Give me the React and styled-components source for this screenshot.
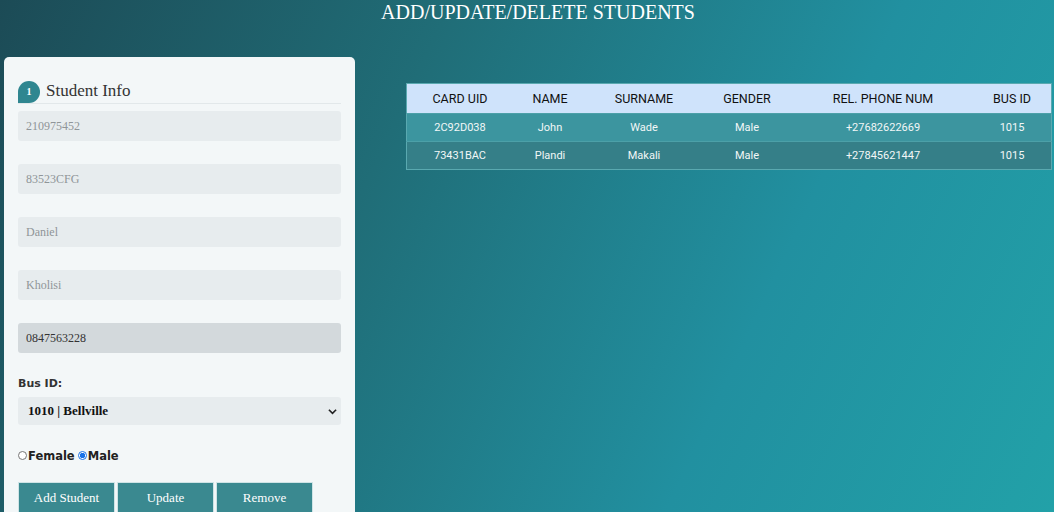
import React, { useState } from 'react'
import styled, { createGlobalStyle } from 'styled-components'

const GlobalStyle = createGlobalStyle`
  html, body {
    margin: 0;
    height: 100%;
    overflow: hidden;
  }
  body {
    background: linear-gradient(115deg, #1c4b56 0%, #206d77 35%, #2190a0 70%, #22a1a8 100%);
    font-family: "Liberation Serif", serif;
  }
`

const Page = styled.div`
  height: 512px;
  display: flex;
  flex-direction: column;
`

const Heading = styled.h1`
  flex-shrink: 0;
  margin: 0;
  height: 57px;
  text-align: center;
  color: #fff;
  font-weight: normal;
  font-size: 20px;
  line-height: 24px;
  font-family: "Liberation Serif", serif;
  padding-left: 22px;
`

const Main = styled.div`
  flex-shrink: 0;
  display: flex;
  align-items: flex-start;
  padding-left: 4px;
  gap: 51px;
`

const Card = styled.div`
  flex-shrink: 0;
  width: 351px;
  height: 480px;
  box-sizing: border-box;
  background: #f3f7f8;
  border-radius: 5px;
  padding: 22px 14px 0 14px;
`

const CardHead = styled.div`
  display: flex;
  align-items: center;
  gap: 6px;
  border-bottom: 1px solid #e2e8ea;
  margin-bottom: 7px;
  height: 24px;
`

const Badge = styled.span`
  width: 22px;
  height: 22px;
  background: #2f8690;
  color: #fff;
  font-size: 10px;
  font-weight: bold;
  border-radius: 50% 50% 50% 0;
  display: flex;
  align-items: center;
  justify-content: center;
  margin-top: 1px;
`

const CardTitle = styled.h2`
  margin: 0;
  font-weight: normal;
  font-size: 17px;
  color: #333;
  font-family: "Liberation Serif", serif;
`

const Fields = styled.div`
  display: flex;
  flex-direction: column;
  gap: 23px;
`

const Field = styled.input`
  height: 30px;
  box-sizing: border-box;
  border: none;
  border-radius: 3px;
  background: ${p => (p.$active ? '#d3d9dc' : '#e7ecee')};
  padding: 0 8px;
  font-family: "Liberation Serif", serif;
  font-size: 12px;
  color: #333;
  outline: none;
  &::placeholder {
    color: #8f9598;
  }
`

const Label = styled.label`
  display: block;
  margin-top: 24px;
  font-family: "DejaVu Sans", sans-serif;
  font-weight: bold;
  font-size: 11px;
  color: #333;
`

const SelectBox = styled.div`
  position: relative;
  margin-top: 7px;
  height: 28px;
  background: #e7ecee;
  border-radius: 3px;
  display: flex;
  align-items: center;
  padding-left: 10px;
  font-family: "Liberation Serif", serif;
  font-weight: bold;
  font-size: 13px;
  color: #111;
`

const Chevron = styled.svg`
  position: absolute;
  right: 4px;
  top: 11px;
`

const Radios = styled.div`
  display: flex;
  align-items: center;
  margin-top: 24px;
  font-family: "DejaVu Sans", sans-serif;
  font-weight: bold;
  font-size: 11.5px;
  color: #222;
`

const Radio = styled.span`
  box-sizing: border-box;
  width: 9px;
  height: 9px;
  border-radius: 50%;
  border: 1px solid ${p => (p.$on ? '#1a73e8' : '#777')};
  background: ${p => (p.$on ? 'radial-gradient(circle, #1a73e8 0 2.5px, #fff 3px)' : '#fff')};
  margin-right: 1px;
  margin-left: ${p => (p.$gap ? '3px' : '0')};
  position: relative;
  top: -1px;
`

const Buttons = styled.div`
  display: flex;
  gap: 2px;
  margin-top: 19px;
`

const Button = styled.button`
  width: 97px;
  height: 34px;
  background: #3a8990;
  color: #fff;
  border: 1px solid #cfe4e6;
  font-family: "Liberation Serif", serif;
  font-size: 13px;
  padding: 0 0 2px;
`

const TableWrap = styled.div`
  margin-top: 26px;
`

const Table = styled.table`
  border-collapse: collapse;
  width: 646px;
  border: 1px solid #5aa9b0;
  font-family: Roboto, sans-serif;
  text-align: center;
`

const Th = styled.th`
  background: #cfe3fb;
  color: #111;
  font-weight: normal;
  font-size: 12.5px;
  height: 29px;
  padding: 0;
  width: ${p => p.$w}px;
`

const Tr = styled.tr`
  background: ${p => (p.$dark ? '#357f88' : '#3c959f')};
  border-top: 1px solid #4ca0a8;
`

const Td = styled.td`
  color: #f2f7f7;
  font-size: 11px;
  height: 27px;
  padding: 0;
`

const columns = [
  ['CARD UID', 106],
  ['NAME', 74],
  ['SURNAME', 114],
  ['GENDER', 92],
  ['REL. PHONE NUM', 180],
  ['BUS ID', 78],
]

const students = [
  ['2C92D038', 'John', 'Wade', 'Male', '+27682622669', '1015'],
  ['73431BAC', 'Plandi', 'Makali', 'Male', '+27845621447', '1015'],
]

const App = () => {
  const [phone, setPhone] = useState('0847563228')

  return (
    <Page>
      <GlobalStyle />
      <Heading>ADD/UPDATE/DELETE STUDENTS</Heading>
      <Main>
        <Card>
          <CardHead>
            <Badge>1</Badge>
            <CardTitle>Student Info</CardTitle>
          </CardHead>
          <Fields>
            <Field placeholder="210975452" />
            <Field placeholder="83523CFG" />
            <Field placeholder="Daniel" />
            <Field placeholder="Kholisi" />
            <Field $active value={phone} onChange={e => setPhone(e.target.value)} />
          </Fields>
          <Label>Bus ID:</Label>
          <SelectBox>
            1010 | Bellville
            <Chevron width="9" height="7" viewBox="0 0 10 7">
              <path d="M1 1.5l4 4 4-4" fill="none" stroke="#222" strokeWidth="1.8" />
            </Chevron>
          </SelectBox>
          <Radios>
            <Radio />Female<Radio $on $gap />Male
          </Radios>
          <Buttons>
            <Button>Add Student</Button>
            <Button>Update</Button>
            <Button>Remove</Button>
          </Buttons>
        </Card>
        <TableWrap>
          <Table>
            <thead>
              <tr>
                {columns.map(([name, w]) => (
                  <Th key={name} $w={w}>{name}</Th>
                ))}
              </tr>
            </thead>
            <tbody>
              {students.map((row, i) => (
                <Tr key={row[0]} $dark={i % 2 === 1}>
                  {row.map((cell, j) => <Td key={j}>{cell}</Td>)}
                </Tr>
              ))}
            </tbody>
          </Table>
        </TableWrap>
      </Main>
    </Page>
  )
}

export default App
